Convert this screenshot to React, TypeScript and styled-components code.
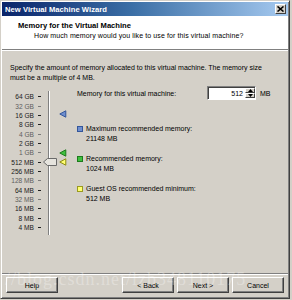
import styled, { createGlobalStyle } from "styled-components";

const GlobalStyle = createGlobalStyle`
  html, body {
    margin: 0;
    padding: 0;
    background: #d4d0c8;
  }
  body {
    font-family: "Liberation Sans", Arial, sans-serif;
  }
`;

interface ScaleLabel {
  text: string;
  faint?: boolean;
}

const scaleLabels: ScaleLabel[] = [
  { text: "64 GB" },
  { text: "32 GB", faint: true },
  { text: "16 GB" },
  { text: "8 GB" },
  { text: "4 GB", faint: true },
  { text: "2 GB" },
  { text: "1 GB", faint: true },
  { text: "512 MB" },
  { text: "256 MB" },
  { text: "128 MB", faint: true },
  { text: "64 MB" },
  { text: "32 MB", faint: true },
  { text: "16 MB" },
  { text: "8 MB" },
  { text: "4 MB" },
];

const ROW = 9.36;

const legend = [
  { color: "#6f8fcf", edge: "#34569a", label: "Maximum recommended memory:", value: "21148 MB" },
  { color: "#3fc03f", edge: "#1d7a1d", label: "Recommended memory:", value: "1024 MB" },
  { color: "#ffff70", edge: "#9a9a20", label: "Guest OS recommended minimum:", value: "512 MB" },
];

const Marker = ({ fill, stroke, top }: { fill: string; stroke: string; top: number }) => (
  <MarkerIcon width="8" height="8" viewBox="0 0 8 8" style={{ top }}>
    <polygon points="0.8,4 6.8,0.8 6.8,7.2" fill={fill} stroke={stroke} strokeWidth="1" />
  </MarkerIcon>
);

const App = () => {
  return (
    <>
      <GlobalStyle />
      <Window>
        <TitleBar>
          <TitleText>New Virtual Machine Wizard</TitleText>
          <CloseButton>
            <svg width="7" height="6" viewBox="0 0 7 6">
              <path d="M0.5 0.5 L6.5 5.5 M6.5 0.5 L0.5 5.5" stroke="#000" strokeWidth="1.6" />
            </svg>
          </CloseButton>
        </TitleBar>
        <Header>
          <HeaderTitle>Memory for the Virtual Machine</HeaderTitle>
          <HeaderSub>How much memory would you like to use for this virtual machine?</HeaderSub>
        </Header>
        <Body>
          <Intro>
            Specify the amount of memory allocated to this virtual machine. The memory size
            <br />
            must be a multiple of 4 MB.
          </Intro>
          <Main>
            <ScaleBox>
              <Labels>
                {scaleLabels.map((l) => (
                  <LabelRow key={l.text} $faint={l.faint}>
                    <span>{l.text}</span>
                    <Tick $faint={l.faint} />
                  </LabelRow>
                ))}
              </Labels>
              <Track />
              <Markers>
                <Marker fill="#6f8fcf" stroke="#34569a" top={ROW * 1.95} />
                <Marker fill="#3fc03f" stroke="#1d7a1d" top={ROW * 6.05} />
                <Marker fill="#ffff70" stroke="#8a8a10" top={ROW * 7.05} />
              </Markers>
              <Thumb width="14" height="8" viewBox="0 0 14 8" style={{ top: ROW * 7.5 - 4 }}>
                <polygon points="0.5,4 4.5,0.5 13.5,0.5 13.5,7.5 4.5,7.5" fill="#e6e4de" stroke="#6a6a6a" strokeWidth="1" />
              </Thumb>
            </ScaleBox>
            <Info>
              <MemoryRow>
                <MemoryLabel>Memory for this virtual machine:</MemoryLabel>
                <Spin>
                  <SpinInput>512</SpinInput>
                  <SpinArrows>
                    <SpinArrow>
                      <svg width="5" height="3" viewBox="0 0 5 3"><polygon points="2.5,0 5,3 0,3" fill="#000" /></svg>
                    </SpinArrow>
                    <SpinArrow>
                      <svg width="5" height="3" viewBox="0 0 5 3"><polygon points="0,0 5,0 2.5,3" fill="#000" /></svg>
                    </SpinArrow>
                  </SpinArrows>
                </Spin>
                <Unit>MB</Unit>
              </MemoryRow>
              <LegendList>
                {legend.map((item) => (
                  <LegendItem key={item.label}>
                    <LegendHead>
                      <Swatch $color={item.color} $edge={item.edge} />
                      <span>{item.label}</span>
                    </LegendHead>
                    <LegendValue>{item.value}</LegendValue>
                  </LegendItem>
                ))}
              </LegendList>
            </Info>
          </Main>
        </Body>
        <Footer>
          <Button>Help</Button>
          <Spacer />
          <Button>&lt; Back</Button>
          <Button>Next &gt;</Button>
          <Button>Cancel</Button>
        </Footer>
        <Watermark>//blog.csdn.net/lzb348110175</Watermark>
      </Window>
    </>
  );
};

const Window = styled.div`
  position: relative;
  box-sizing: border-box;
  width: 290px;
  height: 299px;
  padding: 1px;
  display: flex;
  flex-direction: column;
  background: #d4d0c8;
  border: 1px solid;
  border-color: #d4d0c8 #404040 #404040 #d4d0c8;
  box-shadow: inset 1px 1px #ffffff, inset -1px -1px #808080;
  overflow: hidden;
  font-family: "Liberation Sans", Arial, sans-serif;
  font-size: 7px;
  color: #000;
`;

const TitleBar = styled.div`
  height: 14px;
  padding: 0 2px 0 3px;
  display: flex;
  align-items: center;
  background: linear-gradient(90deg, #0a246a 0%, #3a6ea5 45%, #a6caf0 100%);
`;

const TitleText = styled.div`
  flex: 1;
  color: #fff;
  font-weight: bold;
  font-size: 7.6px;
  letter-spacing: 0.05px;
`;

const CloseButton = styled.div`
  box-sizing: border-box;
  width: 11px;
  height: 10px;
  display: flex;
  align-items: center;
  justify-content: center;
  background: #d4d0c8;
  border: 1px solid;
  border-color: #ffffff #404040 #404040 #ffffff;
`;

const Header = styled.div`
  height: 34px;
  box-sizing: border-box;
  padding: 5px 0 0 16px;
  background: #ffffff;
  border-bottom: 1px solid #808080;
  box-shadow: 0 1px #ffffff;
`;

const HeaderTitle = styled.div`
  font-weight: bold;
  font-size: 7.6px;
  line-height: 9px;
`;

const HeaderSub = styled.div`
  margin-top: 1px;
  padding-left: 16px;
  line-height: 9px;
  letter-spacing: 0.1px;
`;

const Body = styled.div`
  flex: 1;
  display: flex;
  flex-direction: column;
  padding: 13px 0 0 8px;
`;

const Intro = styled.div`
  line-height: 9.5px;
  white-space: nowrap;
`;

const Main = styled.div`
  display: flex;
  margin-top: 4px;
`;

const ScaleBox = styled.div`
  position: relative;
  display: flex;
  margin-top: 6px;
  width: 67px;
  flex-shrink: 0;
`;

const Labels = styled.div`
  display: grid;
  grid-template-rows: repeat(15, ${ROW}px);
  width: 31px;
`;

const LabelRow = styled.div<{ $faint?: boolean }>`
  display: flex;
  align-items: center;
  justify-content: flex-end;
  color: ${(p) => (p.$faint ? "#5e5e5e" : "#1a1a1a")};
  font-size: 6.6px;
`;

const Tick = styled.div<{ $faint?: boolean }>`
  width: 3px;
  height: 1px;
  margin-left: 4px;
  background: ${(p) => (p.$faint ? "#7a7a7a" : "#202020")};
`;

const Track = styled.div`
  width: 1px;
  margin: -1px 0 -3px 7px;
  background: #808080;
  border-right: 1px solid #ffffff;
`;

const Markers = styled.div`
  position: relative;
  flex: 1;
`;

const MarkerIcon = styled.svg`
  position: absolute;
  left: 9px;
`;

const Thumb = styled.svg`
  position: absolute;
  left: 33px;
`;

const Info = styled.div`
  display: flex;
  flex-direction: column;
`;

const MemoryRow = styled.div`
  display: flex;
  align-items: center;
  height: 14px;
`;

const MemoryLabel = styled.div`
  width: 130px;
`;

const Spin = styled.div`
  box-sizing: border-box;
  display: flex;
  width: 49px;
  height: 14px;
  background: #fff;
  border: 1px solid;
  border-color: #808080 #ffffff #ffffff #808080;
  box-shadow: inset 1px 1px #404040;
`;

const SpinInput = styled.div`
  flex: 1;
  text-align: right;
  padding: 2px 2px 0 0;
  line-height: 9px;
`;

const SpinArrows = styled.div`
  display: flex;
  flex-direction: column;
  width: 10px;
  padding: 1px 0;
`;

const SpinArrow = styled.div`
  box-sizing: border-box;
  flex: 1;
  display: flex;
  align-items: center;
  justify-content: center;
  background: #d4d0c8;
  border: 1px solid;
  border-color: #ffffff #404040 #404040 #ffffff;
`;

const Unit = styled.div`
  margin-left: 4px;
`;

const LegendList = styled.div`
  display: flex;
  flex-direction: column;
  gap: 11px;
  margin-top: 24px;
`;

const LegendItem = styled.div`
  display: flex;
  flex-direction: column;
  line-height: 9.5px;
`;

const LegendHead = styled.div`
  display: flex;
  align-items: center;
  gap: 3px;
`;

const Swatch = styled.div<{ $color: string; $edge: string }>`
  box-sizing: border-box;
  width: 6px;
  height: 6px;
  background: ${(p) => p.$color};
  border: 1px solid ${(p) => p.$edge};
`;

const LegendValue = styled.div`
  padding-left: 9px;
`;

const Footer = styled.div`
  display: flex;
  gap: 3px;
  padding: 3px 4px 4px 4px;
  border-top: 1px solid #808080;
  box-shadow: inset 0 1px #ffffff;
`;

const Spacer = styled.div`
  flex: 1;
`;

const Button = styled.div`
  box-sizing: border-box;
  width: 52px;
  height: 16px;
  display: flex;
  align-items: center;
  justify-content: center;
  background: #d4d0c8;
  border: 1px solid;
  border-color: #ffffff #404040 #404040 #ffffff;
  box-shadow: inset -1px -1px #808080;
`;

const Watermark = styled.div`
  position: absolute;
  left: 4px;
  top: 268px;
  font-family: "Liberation Serif", "Times New Roman", serif;
  font-size: 18px;
  letter-spacing: 1px;
  color: rgba(255, 255, 255, 0.3);
  white-space: nowrap;
  pointer-events: none;
`;

export default App;
